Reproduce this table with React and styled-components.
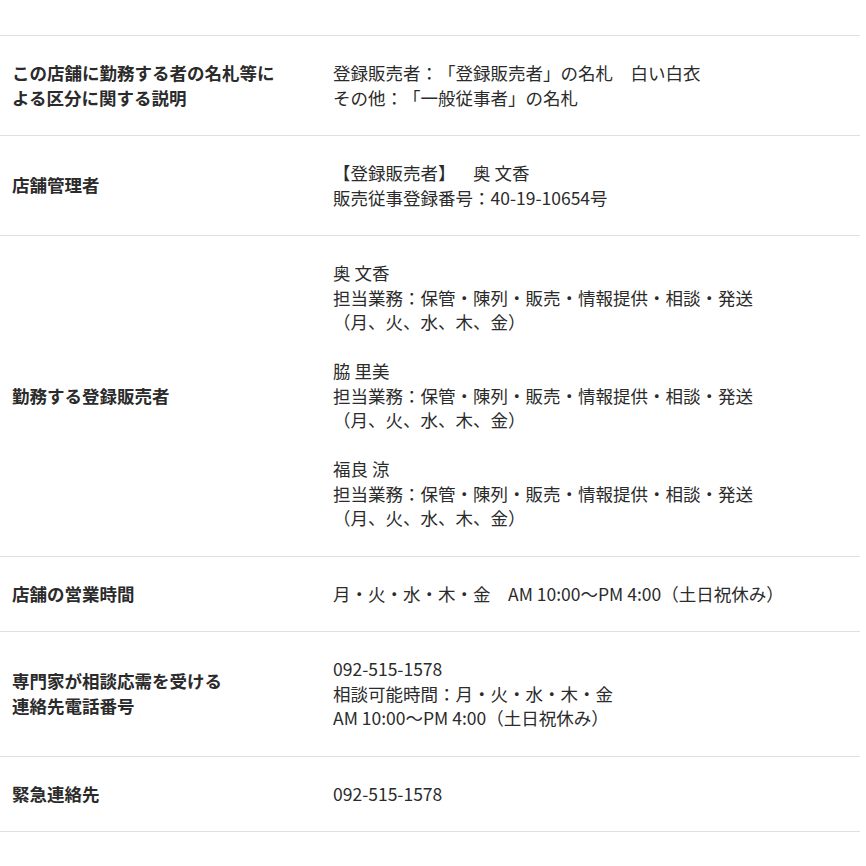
import React from 'react';
import styled, { createGlobalStyle } from 'styled-components';

const rows = [
  {
    label: ['この店舗に勤務する者の名札等に', 'よる区分に関する説明'],
    value: ['登録販売者：「登録販売者」の名札　白い白衣', 'その他：「一般従事者」の名札'],
  },
  {
    label: ['店舗管理者'],
    value: ['【登録販売者】　奥 文香', '販売従事登録番号：40-19-10654号'],
  },
  {
    label: ['勤務する登録販売者'],
    value: [
      '奥 文香',
      '担当業務：保管・陳列・販売・情報提供・相談・発送',
      '（月、火、水、木、金）',
      '',
      '脇 里美',
      '担当業務：保管・陳列・販売・情報提供・相談・発送',
      '（月、火、水、木、金）',
      '',
      '福良 涼',
      '担当業務：保管・陳列・販売・情報提供・相談・発送',
      '（月、火、水、木、金）',
    ],
  },
  {
    label: ['店舗の営業時間'],
    value: ['月・火・水・木・金　AM 10:00～PM 4:00（土日祝休み）'],
  },
  {
    label: ['専門家が相談応需を受ける', '連絡先電話番号'],
    value: ['092-515-1578', '相談可能時間：月・火・水・木・金', 'AM 10:00～PM 4:00（土日祝休み）'],
  },
  {
    label: ['緊急連絡先'],
    value: ['092-515-1578'],
  },
];

const App = () => {
  return (
    <>
      <GlobalStyle />
      <Page>
        <Table>
          {rows.map((row, i) => (
            <Row key={i}>
              <Label>
                {row.label.map((line, j) => (
                  <Line key={j}>{line}</Line>
                ))}
              </Label>
              <Value>
                {row.value.map((line, j) => (
                  <Line key={j}>{line || '\u00a0'}</Line>
                ))}
              </Value>
            </Row>
          ))}
        </Table>
      </Page>
    </>
  );
};

// Styled Components
const GlobalStyle = createGlobalStyle`
  body {
    margin: 0;
    background: #fff;
    font-family: "Noto Sans CJK JP", "Noto Sans", sans-serif;
    color: #333;
    text-spacing-trim: space-all;
  }
`;

const Page = styled.div`
  padding-top: 35px;
  width: 860px;
`;

const Table = styled.div`
  border-top: 1px solid #e0e0e0;
`;

const Row = styled.div`
  display: grid;
  grid-template-columns: 321px 1fr;
  border-bottom: 1px solid #e0e0e0;
`;

const Label = styled.div`
  display: flex;
  flex-direction: column;
  justify-content: center;
  padding: 25px 40px 25px 12px;
  font-size: 17.5px;
  line-height: 24.5px;
  font-weight: bold;
  color: #2b2b2b;
`;

const Value = styled.div`
  padding: 25px 12px;
  font-size: 17.5px;
  line-height: 24.5px;
  color: #2b2b2b;
`;

const Line = styled.div`
  white-space: pre;
  text-spacing-trim: space-all;
`;

export default App;
